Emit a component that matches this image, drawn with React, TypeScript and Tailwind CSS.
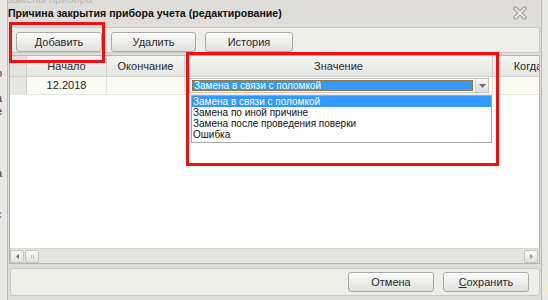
import React from "react";

const F = "font-['Liberation_Sans','Arial',sans-serif]";

function Btn({ children, w }: { children: React.ReactNode; w: string }) {
  return (
    <div
      className={`${w} h-[20px] flex items-center justify-center rounded-[3px] border border-[#a9a9a6] bg-linear-to-b from-[#fbfbfa] to-[#e0e0dc] text-[11px] text-[#2a2a2a] shadow-[inset_0_1px_0_#ffffff]`}
    >
      {children}
    </div>
  );
}

function CloseIcon() {
  return (
    <svg width="14" height="14" viewBox="0 0 14 14">
      <path d="M2.5 2.5 L11.5 11.5 M11.5 2.5 L2.5 11.5" stroke="#9a9a98" strokeWidth="4.2" strokeLinecap="round" />
      <path d="M2.5 2.5 L11.5 11.5 M11.5 2.5 L2.5 11.5" stroke="#e6e6e3" strokeWidth="2.2" strokeLinecap="round" />
    </svg>
  );
}

export default function App() {
  return (
    <div className={`relative w-[548px] h-[300px] overflow-hidden bg-[#dedddA] flex ${F}`}>
      {/* left strip: underlying page */}
      <div className="w-[8px] h-full bg-[#e7e7e4] border-r border-[#b9b9b6] flex flex-col overflow-hidden text-[11px] text-[#333] leading-none">
        <div className="h-[68px]" />
        <div className="-ml-[4px]">о</div>
        <div className="h-[14px]" />
        <div className="-ml-[4px]">а</div>
        <div className="h-[2px]" />
        <div className="-ml-[4px]">е</div>
        <div className="h-[20px]" />
        <div className="-ml-[4px]">-</div>
        <div className="h-[20px]" />
        <div className="-ml-[4px]">а</div>
        <div className="h-[30px]" />
        <div className="-ml-[4px]">с</div>
        <div className="h-[60px]" />
        <div className="-ml-[4px]">-</div>
      </div>

      {/* dialog */}
      <div className="w-[533px] h-full flex flex-col">
        {/* title */}
        <div className="h-[27px] relative flex flex-col">
          <div className="h-[5px] overflow-hidden">
            <div className="-mt-[6px] -ml-[10px] text-[11px] leading-[11px] text-[#b5b5b2] whitespace-nowrap">р замены прибора</div>
          </div>
          <div className="flex items-center justify-between h-[17px]">
            <div className="text-[10.6px] leading-[13px] font-bold text-[#111] whitespace-nowrap">
              Причина закрытия прибора учета (редактирование)
            </div>
            <div className="mr-[14px] mt-[-2px]">
              <CloseIcon />
            </div>
          </div>
        </div>

        {/* toolbar panel */}
        <div className="ml-[1px] w-[531px] h-[26px] rounded-[3px] border border-[#c9c9c5] bg-[#eeeee9] flex items-end gap-[9px] pl-[6px] pb-[0px]">
          <Btn w="w-[86px]">Добавить</Btn>
          <Btn w="w-[85px]">Удалить</Btn>
          <Btn w="w-[88px]">История</Btn>
        </div>

        {/* table */}
        <div className="mt-[2px] ml-[1px] w-[531px] h-[209px] border border-[#b5b5b2] bg-white flex flex-col overflow-hidden">
          {/* header */}
          <div className="h-[21px] flex bg-linear-to-b from-[#f5f5f2] to-[#e5e5e1] border-b border-[#d2d2ce] text-[11px] text-[#2a2a2a] whitespace-nowrap">
            <div className="w-[17px] shrink-0 border-r border-[#d0d0cc] bg-[#e3e3df]" />
            <div className="w-[80px] shrink-0 border-r border-[#d0d0cc] flex items-center justify-center">Начало</div>
            <div className="w-[78px] shrink-0 border-r border-[#d0d0cc] flex items-center justify-center">Окончание</div>
            <div className="w-[308px] shrink-0 border-r border-[#c8c8c4] flex items-center justify-center">Значение</div>
            <div className="w-[70px] shrink-0 flex items-center justify-center">Когда</div>
          </div>
          {/* row */}
          <div className="h-[18px] flex border-b border-[#e6e6e2] text-[11px] text-[#222] whitespace-nowrap">
            <div className="w-[17px] shrink-0 border-r border-[#d0d0cc] bg-[#e6e6e2]" />
            <div className="w-[80px] shrink-0 border-r border-[#e4e4dc] bg-[#fafaf0] flex items-center justify-center">12.2018</div>
            <div className="w-[78px] shrink-0 border-r border-[#e4e4dc] bg-[#fafaf0]" />
            <div className="w-[308px] shrink-0 border-r border-[#e4e4dc] bg-[#fafaf0] pl-[4px] pt-[1px]">
              <div className="w-[300px] h-[15px] flex items-stretch border border-[#c5c5c1] bg-white">
                <div className="ml-[2px] my-[1px] w-[282px] border border-dotted border-[#8a6a3a] bg-[#3399ff] text-white text-[10px] leading-[11px] pl-[1px] flex items-center">
                  Замена в связи с поломкой
                </div>
                <div className="ml-[2px] my-[0px] w-[13px] bg-linear-to-b from-[#f7f7f5] to-[#dededa] border-l border-[#d0d0cc] flex items-center justify-center">
                  <svg width="7" height="4" viewBox="0 0 7 4">
                    <path d="M0 0 L7 0 L3.5 4 Z" fill="#6d6d6b" />
                  </svg>
                </div>
              </div>
            </div>
            <div className="w-[70px] shrink-0 bg-[#fafaf0]" />
          </div>
          <div className="flex-1 bg-white" />
          {/* h scrollbar */}
          <div className="h-[15px] bg-[#e4e4e0] border-t border-[#d6d6d2] flex items-center px-[0px]">
            <div className="w-[14px] h-[13px] rounded-[2px] border border-[#c4c4c0] bg-linear-to-b from-[#f8f8f6] to-[#e2e2de] flex items-center justify-center">
              <svg width="3" height="5" viewBox="0 0 3 5">
                <path d="M3 0 L0 2.5 L3 5 Z" fill="#707070" />
              </svg>
            </div>
            <div className="ml-[1px] w-[14px] h-[13px] rounded-[2px] border border-[#c4c4c0] bg-linear-to-b from-[#f8f8f6] to-[#e2e2de] flex items-center justify-center gap-[1px]">
              <div className="w-[1px] h-[3px] bg-[#b5b5b2]" />
              <div className="w-[1px] h-[3px] bg-[#b5b5b2]" />
            </div>
            <div className="flex-1" />
            <div className="w-[14px] h-[13px] mr-[1px] rounded-[2px] border border-[#c4c4c0] bg-linear-to-b from-[#f8f8f6] to-[#e2e2de] flex items-center justify-center">
              <svg width="3" height="5" viewBox="0 0 3 5">
                <path d="M0 0 L3 2.5 L0 5 Z" fill="#9a9a9a" />
              </svg>
            </div>
          </div>
        </div>

        {/* bottom panel */}
        <div className="mt-[4px] ml-[2px] w-[530px] h-[28px] rounded-[3px] border border-[#c9c9c5] bg-[#eeeee9] flex items-center justify-end gap-[9px] pr-[10px]">
          <Btn w="w-[86px]">Отмена</Btn>
          <Btn w="w-[86px]">
            <span>
              <span className="underline">С</span>охранить
            </span>
          </Btn>
        </div>
      </div>

      {/* right strip */}
      <div className="w-[7px] h-full bg-[#e8e8e5] border-l border-[#b9b9b6] flex flex-col">
        <div className="h-[286px]" />
        <div className="h-[6px] bg-[#f0ecc8]" />
      </div>

      {/* dropdown list */}
      <div className="absolute left-[191px] top-[95px] w-[301px] h-[48px] bg-white border border-[#a8a8a5] text-[10px] leading-[11px] text-[#111] whitespace-nowrap">
        <div className="h-[11px] bg-[#3399ff] text-white pl-[1px]">Замена в связи с поломкой</div>
        <div className="h-[11px] pl-[1px]">Замена по иной причине</div>
        <div className="h-[11px] pl-[1px]">Замена после проведения поверки</div>
        <div className="h-[11px] pl-[1px]">Ошибка</div>
      </div>

      {/* red annotation rectangles */}
      <div className="absolute left-[9px] top-[22px] w-[96px] h-[41px] border-[3px] border-[#ee1111]" />
      <div className="absolute left-[186px] top-[52px] w-[313px] h-[114px] border-[3px] border-[#ee1111]" />
    </div>
  );
}
